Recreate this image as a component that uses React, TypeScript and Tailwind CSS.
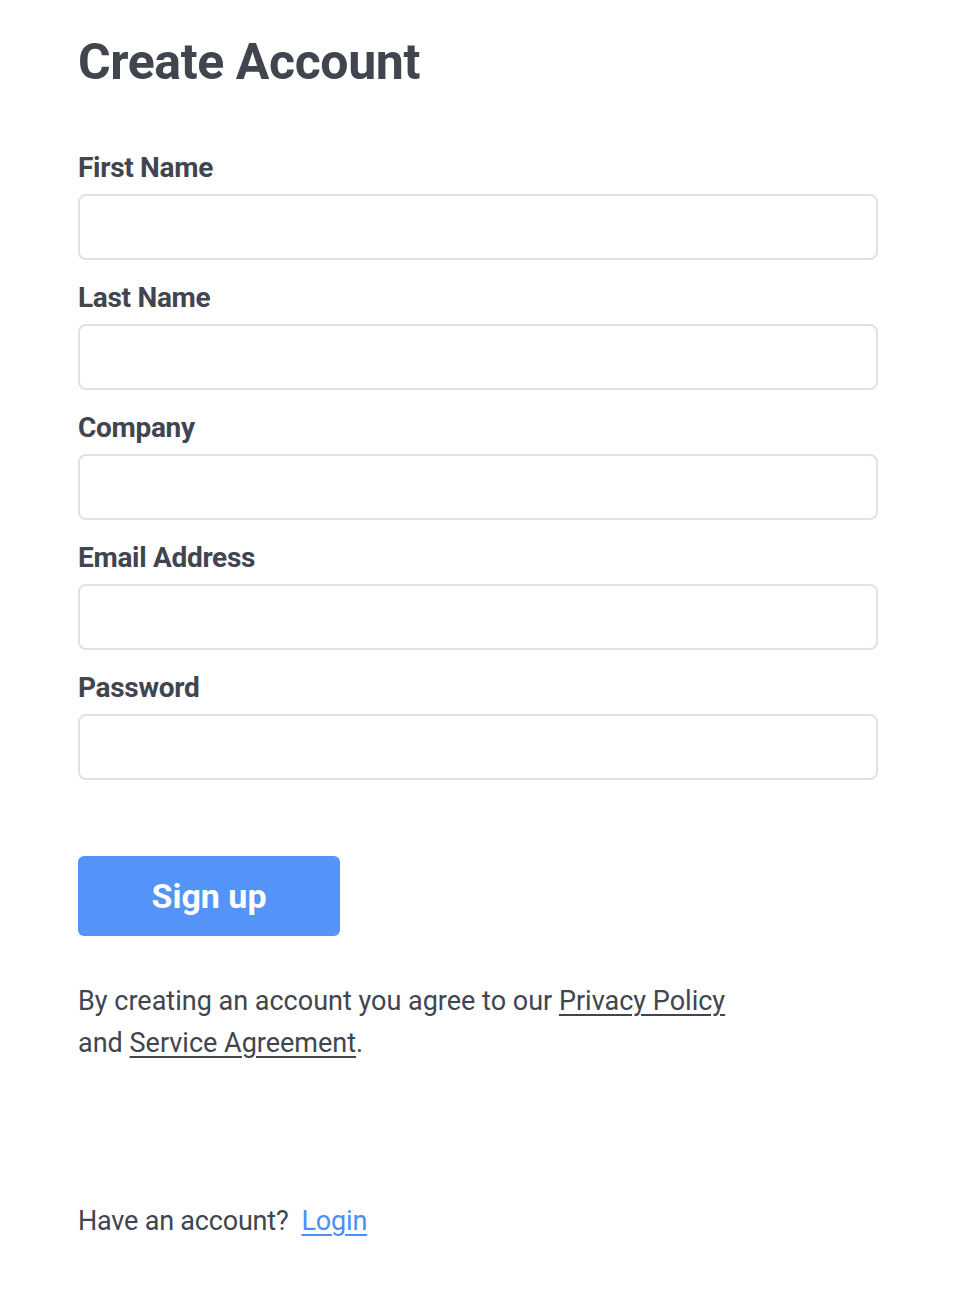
export default function App() {
  const labels = ["First Name", "Last Name", "Company", "Email Address", "Password"];
  return (
    <div className="min-h-[1294px] w-[974px] bg-white text-[#40454f]" style={{ fontFamily: "Roboto, 'Liberation Sans', sans-serif" }}>
      <div className="pl-[78px] pr-[96px] pt-[30px]">
        <h1 className="text-[50px] font-bold leading-[64px] tracking-[-0.4px]">Create Account</h1>
        <form className="mt-[56px] flex flex-col">
          {labels.map((l) => (
            <div key={l} className="flex flex-col">
              <label className="text-[28px] font-bold leading-[36px] tracking-[-0.3px]">{l}</label>
              <input
                type={l === "Password" ? "password" : "text"}
                className="mt-[8px] mb-[20px] h-[66px] w-[800px] rounded-[8px] border-2 border-[#e1e1e4] bg-white px-4 outline-none"
              />
            </div>
          ))}
          <button
            type="button"
            className="mt-[56px] h-[80px] w-[262px] rounded-[6px] bg-[#5493f7] text-[34px] font-bold text-white"
          >
            Sign up
          </button>
        </form>
        <p className="mt-[44px] text-[27px] leading-[42px]">
          By creating an account you agree to our <a className="underline underline-offset-4">Privacy Policy</a>
          <br />
          and <a className="underline underline-offset-4">Service Agreement</a>.
        </p>
        <p className="mt-[136px] text-[27px] leading-[42px] tracking-[-0.2px]">
          Have an account?&nbsp; <a className="text-[#4d8ef5] underline underline-offset-4">Login</a>
        </p>
      </div>
    </div>
  );
}
